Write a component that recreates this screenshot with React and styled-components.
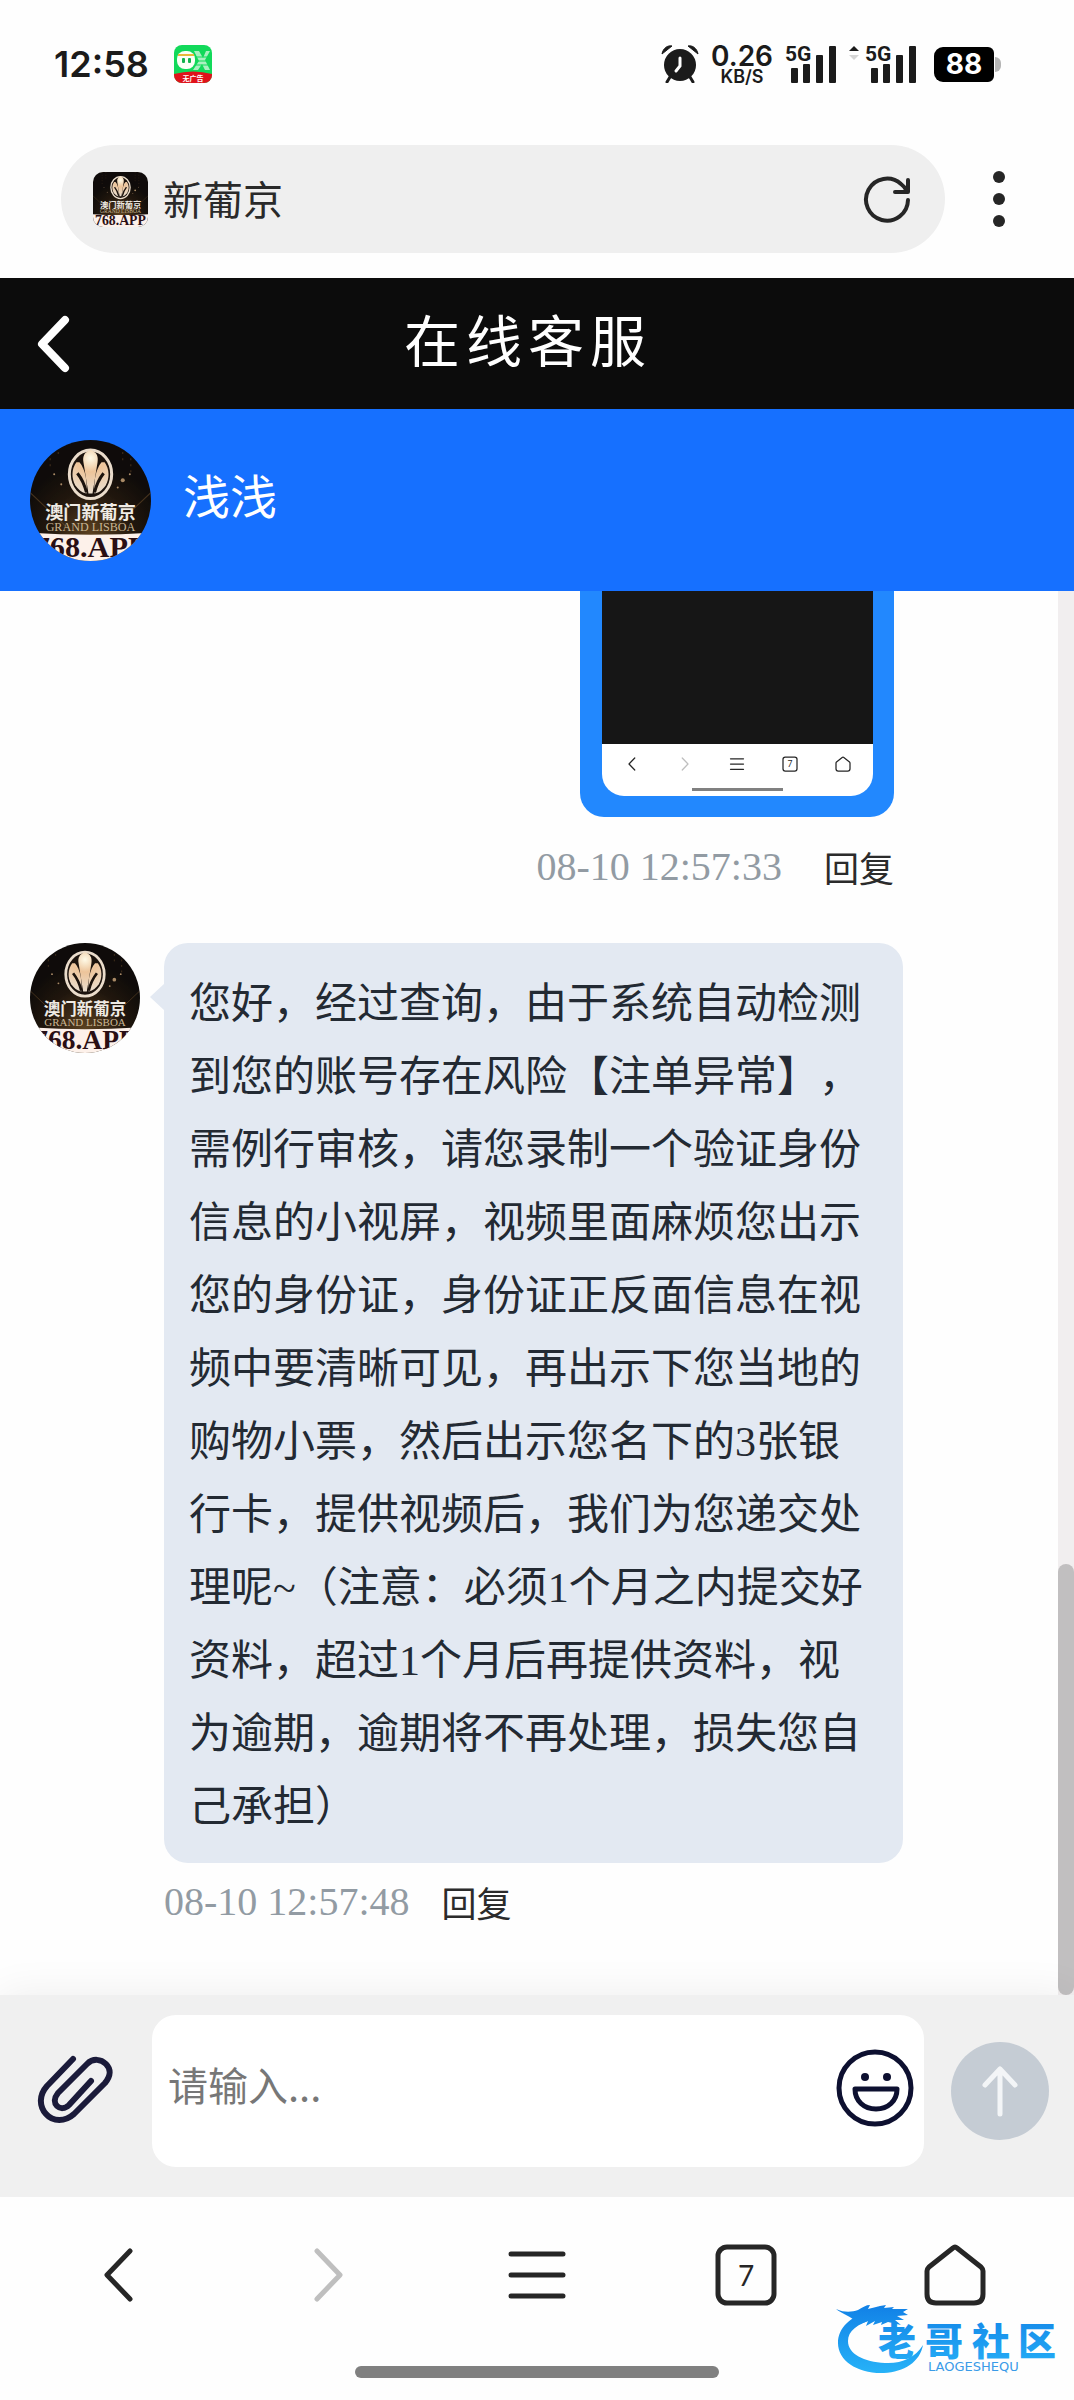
import React from 'react';
import styled, { createGlobalStyle } from 'styled-components';

const GlobalStyle = createGlobalStyle`
  * {
    box-sizing: border-box;
  }
  body {
    margin: 0;
    background: #fefefe;
    font-family: "Liberation Serif", "Noto Sans CJK SC", sans-serif;
    color: #232a33;
  }
  button {
    padding: 0;
    border: 0;
    background: none;
    font: inherit;
    color: inherit;
    cursor: pointer;
  }
  svg {
    display: block;
    flex: none;
  }
`;

const Page = styled.div`
  display: flex;
  flex-direction: column;
  min-height: 100vh;
`;

/* ---------- phone status bar ---------- */

const StatusBar = styled.header`
  display: flex;
  align-items: center;
  justify-content: space-between;
  height: 128px;
  padding: 0 80px 0 54px;
  font-family: Inter, sans-serif;
  font-weight: 600;
  color: #1b1b1b;
`;

const StatusGroup = styled.div`
  display: flex;
  align-items: center;
  gap: ${(p) => p.$gap}px;
`;

const Clock = styled.time`
  font-size: 36px;
  line-height: 40px;
`;

const Speed = styled.div`
  display: flex;
  flex-direction: column;
  align-items: center;
  font-size: 28px;
  line-height: 26px;
  small {
    font-size: 18px;
    line-height: 16px;
  }
`;

const Battery = styled.div`
  position: relative;
  width: 60px;
  height: 35px;
  margin-left: 5px;
  border-radius: 9px 6px 6px 9px;
  background: #000;
  color: #fff;
  font-size: 28px;
  line-height: 35px;
  text-align: center;
  font-weight: 700;
  &::after {
    content: "";
    position: absolute;
    top: 10px;
    right: -7px;
    width: 6px;
    height: 15px;
    border-radius: 0 6px 6px 0;
    background: #b5b5b5;
  }
`;

/* ---------- browser address bar ---------- */

const AddressRow = styled.div`
  display: flex;
  align-items: center;
  gap: 36px;
  padding: 17px 57px 25px 61px;
`;

const AddressBar = styled.div`
  flex: 1;
  display: flex;
  align-items: center;
  height: 108px;
  padding: 0 34px 0 32px;
  border-radius: 54px;
  background: #efefef;
`;

const SiteName = styled.span`
  flex: 1;
  margin-left: 15px;
  padding-bottom: 2px;
  font-family: "Noto Sans CJK SC", sans-serif;
  font-size: 40px;
  line-height: 54px;
  color: #2a2a2a;
`;

/* ---------- page headers ---------- */

const TitleBar = styled.div`
  display: grid;
  grid-template-columns: 106px 1fr 124px;
  align-items: center;
  height: 131px;
  background: #0c0c0c;
  color: #fff;
  h1 {
    margin: 0;
    padding-bottom: 12px;
    font-family: "Noto Sans CJK SC", sans-serif;
    font-size: 56px;
    font-weight: 400;
    line-height: 64px;
    text-align: center;
    letter-spacing: 6px;
  }
  button {
    padding-left: 34px;
    justify-self: start;
  }
`;

const AgentBar = styled.div`
  display: flex;
  align-items: center;
  gap: 32px;
  height: 182px;
  padding: 0 30px;
  background: #1670ff;
`;

const AgentName = styled.span`
  padding-bottom: 12px;
  color: #fff;
  font-family: "Noto Sans CJK SC", sans-serif;
  font-size: 47px;
  line-height: 56px;
`;

const Avatar = styled.div`
  flex: none;
  width: ${(p) => p.$size}px;
  height: ${(p) => p.$size}px;
  border-radius: ${(p) => p.$radius || '50%'};
  overflow: hidden;
`;

/* ---------- chat ---------- */

const Chat = styled.main`
  position: relative;
  flex: 1;
  padding: 0 171px 66px 30px;
`;

const ScrollTrack = styled.div`
  position: absolute;
  top: 0;
  right: 0;
  bottom: 0;
  display: flex;
  flex-direction: column;
  justify-content: flex-end;
  width: 16px;
  background: #f1eeef;
  &::after {
    content: "";
    height: 431px;
    border-radius: 8px;
    background: #c1bfc0;
  }
`;

const Sent = styled.div`
  display: flex;
  flex-direction: column;
  align-items: flex-end;
  padding-right: 9px;
`;

const ImageBubble = styled.div`
  padding: 0 21px 21px 22px;
  border-radius: 0 0 24px 24px;
  background: #2288fe;
`;

const Shot = styled.div`
  width: 271px;
  border-radius: 0 0 22px 22px;
  background: #fff;
  overflow: hidden;
  &::before {
    content: "";
    display: block;
    height: 153px;
    background: #161616;
  }
`;

const ShotNav = styled.div`
  display: flex;
  align-items: center;
  justify-content: space-around;
  height: 40px;
  padding: 0 4px;
`;

const ShotHandle = styled.div`
  width: 91px;
  height: 3px;
  margin: 4px auto 5px;
  background: #808080;
`;

const Meta = styled.div`
  display: flex;
  align-items: center;
  gap: ${(p) => p.$gap}px;
  margin-top: ${(p) => p.$top}px;
  line-height: 50px;
  time {
    font-size: 40px;
    color: #929ba3;
  }
  button {
    font-family: "Noto Sans CJK SC", sans-serif;
    font-size: 35px;
    color: #2b2b2b;
  }
`;

const Received = styled.div`
  display: flex;
  align-items: flex-start;
  gap: 24px;
  margin-top: 51px;
`;

const ReceivedBody = styled.div`
  flex: 1;
`;

const TextBubble = styled.p`
  position: relative;
  margin: 0;
  padding: 25px 25px 19px;
  border-radius: 24px;
  background: #e3e9f2;
  font-size: 42px;
  line-height: 73px;
  text-spacing-trim: space-all;
  &::before {
    content: "";
    position: absolute;
    top: 40px;
    left: -14px;
    border: solid transparent;
    border-width: 14px 15px 14px 0;
    border-right-color: #e3e9f2;
  }
`;

/* ---------- composer ---------- */

const Composer = styled.form`
  position: relative;
  display: flex;
  align-items: center;
  height: 202px;
  padding: 0 25px 10px 37px;
  background: #f0f0f0;
  box-shadow: 0 0 40px rgba(0, 0, 0, 0.07);
`;

const InputBox = styled.label`
  flex: 1;
  display: flex;
  align-items: center;
  height: 152px;
  margin: 0 27px 0 36px;
  padding: 0 9px 6px 16px;
  border-radius: 24px;
  background: #fff;
  input {
    flex: 1;
    min-width: 0;
    padding: 0 0 8px;
    border: 0;
    outline: 0;
    background: none;
    font-family: "Noto Sans CJK SC", sans-serif;
    font-size: 40px;
    line-height: 60px;
  }
  input::placeholder {
    color: #777;
    opacity: 1;
  }
`;

const SendButton = styled.button`
  display: flex;
  align-items: center;
  justify-content: center;
  width: 98px;
  height: 98px;
  border-radius: 50%;
  && {
    background: #c5ccd4;
  }
`;

/* ---------- browser bottom nav ---------- */

const BottomNav = styled.nav`
  position: relative;
  height: 203px;
  padding: 46px 15px 0;
  background: #fefefe;
`;

const NavRow = styled.div`
  display: grid;
  grid-template-columns: repeat(5, 1fr);
  justify-items: center;
  align-items: center;
`;

const Handle = styled.div`
  width: 364px;
  height: 12px;
  margin: 59px auto 0;
  border-radius: 6px;
  background: #808080;
`;

const Watermark = styled.svg`
  position: absolute;
  right: 10px;
  bottom: 20px;
`;

function Brand() {
  return (
    <svg width="100%" height="100%" viewBox="0 0 120 120" role="img" aria-label="澳门新葡京">
      <defs>
        <radialGradient id="glow" cx="50%" cy="78%" r="60%">
          <stop offset="0" stopColor="#5b4120" />
          <stop offset="0.6" stopColor="#21170e" />
          <stop offset="1" stopColor="#0f0c0a" />
        </radialGradient>
        <radialGradient id="gold" cx="60" cy="18" r="34" gradientUnits="userSpaceOnUse">
          <stop offset="0" stopColor="#fffbe8" />
          <stop offset="0.4" stopColor="#edc49a" />
          <stop offset="1" stopColor="#eadccb" />
        </radialGradient>
      </defs>
      <rect width="120" height="120" fill="url(#glow)" />
      <g stroke="#6a4d2b" strokeWidth="1" opacity="0.6">
        <path d="M0 52L38 88M120 52L82 88" />
        <path d="M20 0v30M28 0v18M92 0v22M100 0v34" strokeDasharray="2 4" />
      </g>
      <g fill="#a98a66">
        <circle cx="92" cy="40" r="2" />
        <circle cx="87" cy="47" r="1" />
        <circle cx="99" cy="34" r="1" />
        <circle cx="24" cy="34" r="1" />
        <circle cx="31" cy="44" r="1" />
      </g>
      <ellipse cx="60" cy="34" rx="21" ry="24" fill="#1c130d" stroke="#eadccb" strokeWidth="3" />
      <g fill="url(#gold)">
        <path d="M60 10c6 2 8 6 7 12l-5 31h-4l-5-31c-1-6 1-10 7-12z" />
        <path d="M46 22c-5 7-5 16-1 23 3 4 6 7 11 8 1-12-1-24-7-31z" />
        <path d="M74 22c5 7 5 16 1 23-3 4-6 7-11 8-1-12 1-24 7-31z" />
      </g>
      <path d="M47 33c4 5 7 11 9 19M73 33c-4 5-7 11-9 19" stroke="#1c130d" strokeWidth="3" fill="none" />
      <text x="60" y="78" textAnchor="middle" fontFamily="'Noto Sans CJK SC', sans-serif" fontSize="18" fontWeight="700" fill="#efebe4">
        澳门新葡京
      </text>
      <text x="60" y="90" textAnchor="middle" fontFamily="'Liberation Serif', serif" fontSize="12" fill="#c9b694">
        GRAND LISBOA
      </text>
      <path d="M0 92q60 4 120 0v28H0z" fill="#fdf1ea" />
      <text x="60" y="116" textAnchor="middle" fontFamily="'Liberation Serif', serif" fontSize="30" fontWeight="700" fill="#2a0f14">
        768.APP
      </text>
    </svg>
  );
}

function AppBadge() {
  return (
    <svg width="38" height="38" viewBox="0 0 38 38" aria-hidden="true">
      <clipPath id="badge"><rect width="38" height="38" rx="8" /></clipPath>
      <g clipPath="url(#badge)">
        <rect width="38" height="38" fill="#12d95a" />
        <path d="M20 6h5l4 7 3-7h4l-5 9 5 10h-5l-3-6-4 6h-5l6-9z" fill="#a9f0c0" />
        <path d="M19 12h16M19 16h16M19 20h16" stroke="#12d95a" />
        <rect x="3" y="6" width="18" height="18" rx="8" fill="#fbfff6" />
        <path d="M4 10h16" stroke="#e9b93a" strokeWidth="2" />
        <rect x="8" y="13" width="3" height="5" rx="1" fill="#12b34c" />
        <rect x="14" y="13" width="3" height="5" rx="1" fill="#12b34c" />
        <path d="M0 29q19-5 38 0v9H0z" fill="#e0121a" />
        <text x="19" y="36" textAnchor="middle" fontFamily="'Noto Sans CJK SC', sans-serif" fontSize="7" fontWeight="700" fill="#fff">
          无广告
        </text>
      </g>
    </svg>
  );
}

function Alarm() {
  return (
    <svg width="38" height="38" viewBox="0 0 38 38" aria-hidden="true">
      <circle cx="19" cy="20" r="16" fill="#1b1b1b" />
      <path d="M9 32l-3 5M29 32l3 5" stroke="#1b1b1b" strokeWidth="3" strokeLinecap="round" />
      <path d="M1 9C2 3 7 0 11 1z M37 9C36 3 31 0 27 1z" fill="#1b1b1b" stroke="#1b1b1b" strokeWidth="1" strokeLinejoin="round" />
      <path d="M19 13v8l-4 5" stroke="#fff" strokeWidth="3" fill="none" strokeLinecap="round" />
    </svg>
  );
}

function Signal({ arrows }) {
  const left = arrows ? 16 : 0;
  return (
    <svg width={52 + left} height="50" viewBox={`0 -6 ${52 + left} 50`} aria-label="5G">
      {arrows && (
        <>
          <path d="M0 6l5-5 5 5z" fill="#1b1b1b" />
          <path d="M0 10l5 5 5-5z" fill="#d5d5d5" />
        </>
      )}
      <g transform={`translate(${left} 0)`} fill="#1b1b1b">
        <text x="0" y="16" fontFamily="Roboto, sans-serif" fontSize="21" fontWeight="700">5G</text>
        <rect x="6" y="23" width="7" height="15" rx="1" />
        <rect x="18" y="19" width="7" height="19" rx="1" />
        <rect x="31" y="10" width="7" height="28" rx="1" />
        <rect x="44" y="1" width="7" height="37" rx="1" />
      </g>
    </svg>
  );
}

function NavIcon({ name, size = 64, color = '#262626', tabSize = 28 }) {
  return (
    <svg
      width={size}
      height={size}
      viewBox="0 0 64 64"
      fill="none"
      stroke={color}
      strokeWidth="5"
      strokeLinecap="round"
      strokeLinejoin="round"
      aria-hidden="true"
    >
      {name === 'back' && <path d="M43 8L20 32l23 24" />}
      {name === 'forward' && <path d="M21 8l23 24-23 24" />}
      {name === 'menu' && <path d="M6 11h52M6 32h52M6 53h52" />}
      {name === 'tabs' && (
        <>
          <rect x="4" y="4" width="56" height="56" rx="9" />
          <text x="32" y="43" textAnchor="middle" fontFamily="Lato, sans-serif" fontSize={tabSize} fill={color} stroke="none">7</text>
        </>
      )}
      {name === 'home' && <path d="M30 5q2-2 4 0l24 19q2 2 2 4v23q0 9-9 9H13q-9 0-9-9V28q0-2 2-4z" />}
    </svg>
  );
}

const navItems = [
  { name: 'back', label: '后退' },
  { name: 'forward', label: '前进', color: '#bfbfbf' },
  { name: 'menu', label: '菜单' },
  { name: 'tabs', label: '标签页' },
  { name: 'home', label: '主页' },
];

export default function App() {
  return (
    <Page>
      <GlobalStyle />
      <StatusBar>
        <StatusGroup $gap={25}>
          <Clock>12:58</Clock>
          <AppBadge />
        </StatusGroup>
        <StatusGroup $gap={12}>
          <Alarm />
          <Speed>
            0.26
            <small>KB/S</small>
          </Speed>
          <Signal />
          <Signal arrows />
          <Battery>88</Battery>
        </StatusGroup>
      </StatusBar>

      <AddressRow>
        <AddressBar>
          <Avatar $size={55} $radius="10px"><Brand /></Avatar>
          <SiteName>新葡京</SiteName>
          <button type="button" aria-label="刷新">
            <svg width="48" height="48" viewBox="0 0 48 48" fill="none" stroke="#262626" strokeWidth="4" strokeLinecap="round" strokeLinejoin="round">
              <path d="M45 25A21 21 0 1 1 38 9q4 3 6 7" />
              <path d="M45 5v12H32" />
            </svg>
          </button>
        </AddressBar>
        <button type="button" aria-label="更多">
          <svg width="36" height="56" viewBox="0 0 36 56" fill="#262626">
            <circle cx="18" cy="6" r="6" />
            <circle cx="18" cy="28" r="6" />
            <circle cx="18" cy="50" r="6" />
          </svg>
        </button>
      </AddressRow>

      <TitleBar>
        <button type="button" aria-label="返回">
          <svg width="38" height="60" viewBox="0 0 38 60" fill="none" stroke="#fff" strokeWidth="8" strokeLinecap="round" strokeLinejoin="round">
            <path d="M31 6L8 30l23 24" />
          </svg>
        </button>
        <h1>在线客服</h1>
      </TitleBar>

      <AgentBar>
        <Avatar $size={121}><Brand /></Avatar>
        <AgentName>浅浅</AgentName>
      </AgentBar>

      <Chat>
        <Sent>
          <ImageBubble>
            <Shot>
              <ShotNav>
                {navItems.map((item) => (
                  <NavIcon key={item.name} name={item.name} color={item.color} size={16} tabSize={34} />
                ))}
              </ShotNav>
              <ShotHandle />
            </Shot>
          </ImageBubble>
          <Meta $gap={42} $top={25}>
            <time>08-10 12:57:33</time>
            <button type="button">回复</button>
          </Meta>
        </Sent>

        <Received>
          <Avatar $size={110}><Brand /></Avatar>
          <ReceivedBody>
            <TextBubble>
              您好，经过查询，由于系统自动检测到您的账号存在风险【注单异常】，需例行审核，请您录制一个验证身份信息的小视屏，视频里面麻烦您出示您的身份证，身份证正反面信息在视频中要清晰可见，再出示下您当地的购物小票，然后出示您名下的3张银行卡，提供视频后，我们为您递交处理呢~（注意：必须1个月之内提交好资料，超过1个月后再提供资料，视为逾期，逾期将不再处理，损失您自己承担）
            </TextBubble>
            <Meta $gap={32} $top={14}>
              <time>08-10 12:57:48</time>
              <button type="button">回复</button>
            </Meta>
          </ReceivedBody>
        </Received>
        <ScrollTrack />
      </Chat>

      <Composer onSubmit={(e) => e.preventDefault()}>
        <button type="button" aria-label="附件">
          <svg width="79" height="72" viewBox="0 0 79 72" fill="none" stroke="#1b1b3a" strokeWidth="6" strokeLinecap="round" strokeLinejoin="round">
            <path d="M36 4L10 31c-8 9-8 20-1 28s19 8 28 0l31-31c6-7 6-14 1-19s-13-6-19 0L21 38c-4 5-4 10-1 13s8 3 12-1l22-24" />
          </svg>
        </button>
        <InputBox>
          <input type="text" placeholder="请输入..." aria-label="请输入" />
          <button type="button" aria-label="表情">
            <svg width="80" height="80" viewBox="0 0 80 80" fill="none" stroke="#0d1030" strokeWidth="5" strokeLinejoin="round">
              <circle cx="40" cy="40" r="36" />
              <path d="M20 41h42c0 12-9 20-21 20s-21-8-21-20z" />
              <circle cx="30" cy="29" r="4" fill="#0d1030" stroke="none" />
              <circle cx="52" cy="29" r="4" fill="#0d1030" stroke="none" />
            </svg>
          </button>
        </InputBox>
        <SendButton type="submit" aria-label="发送">
          <svg width="40" height="56" viewBox="0 0 40 56" fill="none" stroke="#f3f5f7" strokeWidth="5" strokeLinecap="round" strokeLinejoin="round">
            <path d="M20 51V6M5 22L20 6l15 16" />
          </svg>
        </SendButton>
      </Composer>

      <BottomNav>
        <NavRow>
          {navItems.map((item) => (
            <button key={item.name} type="button" aria-label={item.label}>
              <NavIcon name={item.name} color={item.color} />
            </button>
          ))}
        </NavRow>
        <Handle />
        <Watermark width="230" height="76" viewBox="0 0 230 76" role="img" aria-label="老哥社区">
          <defs>
            <linearGradient id="water" x1="0" y1="0" x2="0" y2="70" gradientUnits="userSpaceOnUse">
              <stop offset="0" stopColor="#1180e6" />
              <stop offset="1" stopColor="#27b3f8" />
            </linearGradient>
          </defs>
          <g fill="url(#water)">
            <path d="M36 8C16 12 4 24 4 39c0 18 20 31 46 30 20-1 36-11 39-28-8 13-22 19-38 18C30 58 14 50 14 37c0-10 9-17 26-22z" />
            <path d="M2 5c9 4 16 3 22 1 5-3 8-5 12-5l-2 4 12-3 6-1-2 3 10-1-2 2 16 0-5 3 5 3-11 1 7 4-9 0 6 5-13-3-7 3 1-3-9 3 2-4-9 5 2-5-8 3 2-5-8 1C14 11 7 9 2 5z" />
          </g>
          <g fill="url(#water)" fontFamily="'Noto Sans CJK SC', sans-serif" fontSize="38" fontWeight="900">
            <text x="44" y="51">老</text>
            <text x="91" y="51">哥</text>
            <text x="138" y="51">社</text>
            <text x="184" y="51">区</text>
          </g>
          <text x="94" y="67" fontFamily="'DejaVu Sans', sans-serif" fontSize="13" fill="#3a9be8">LAOGESHEQU</text>
        </Watermark>
      </BottomNav>
    </Page>
  );
}
